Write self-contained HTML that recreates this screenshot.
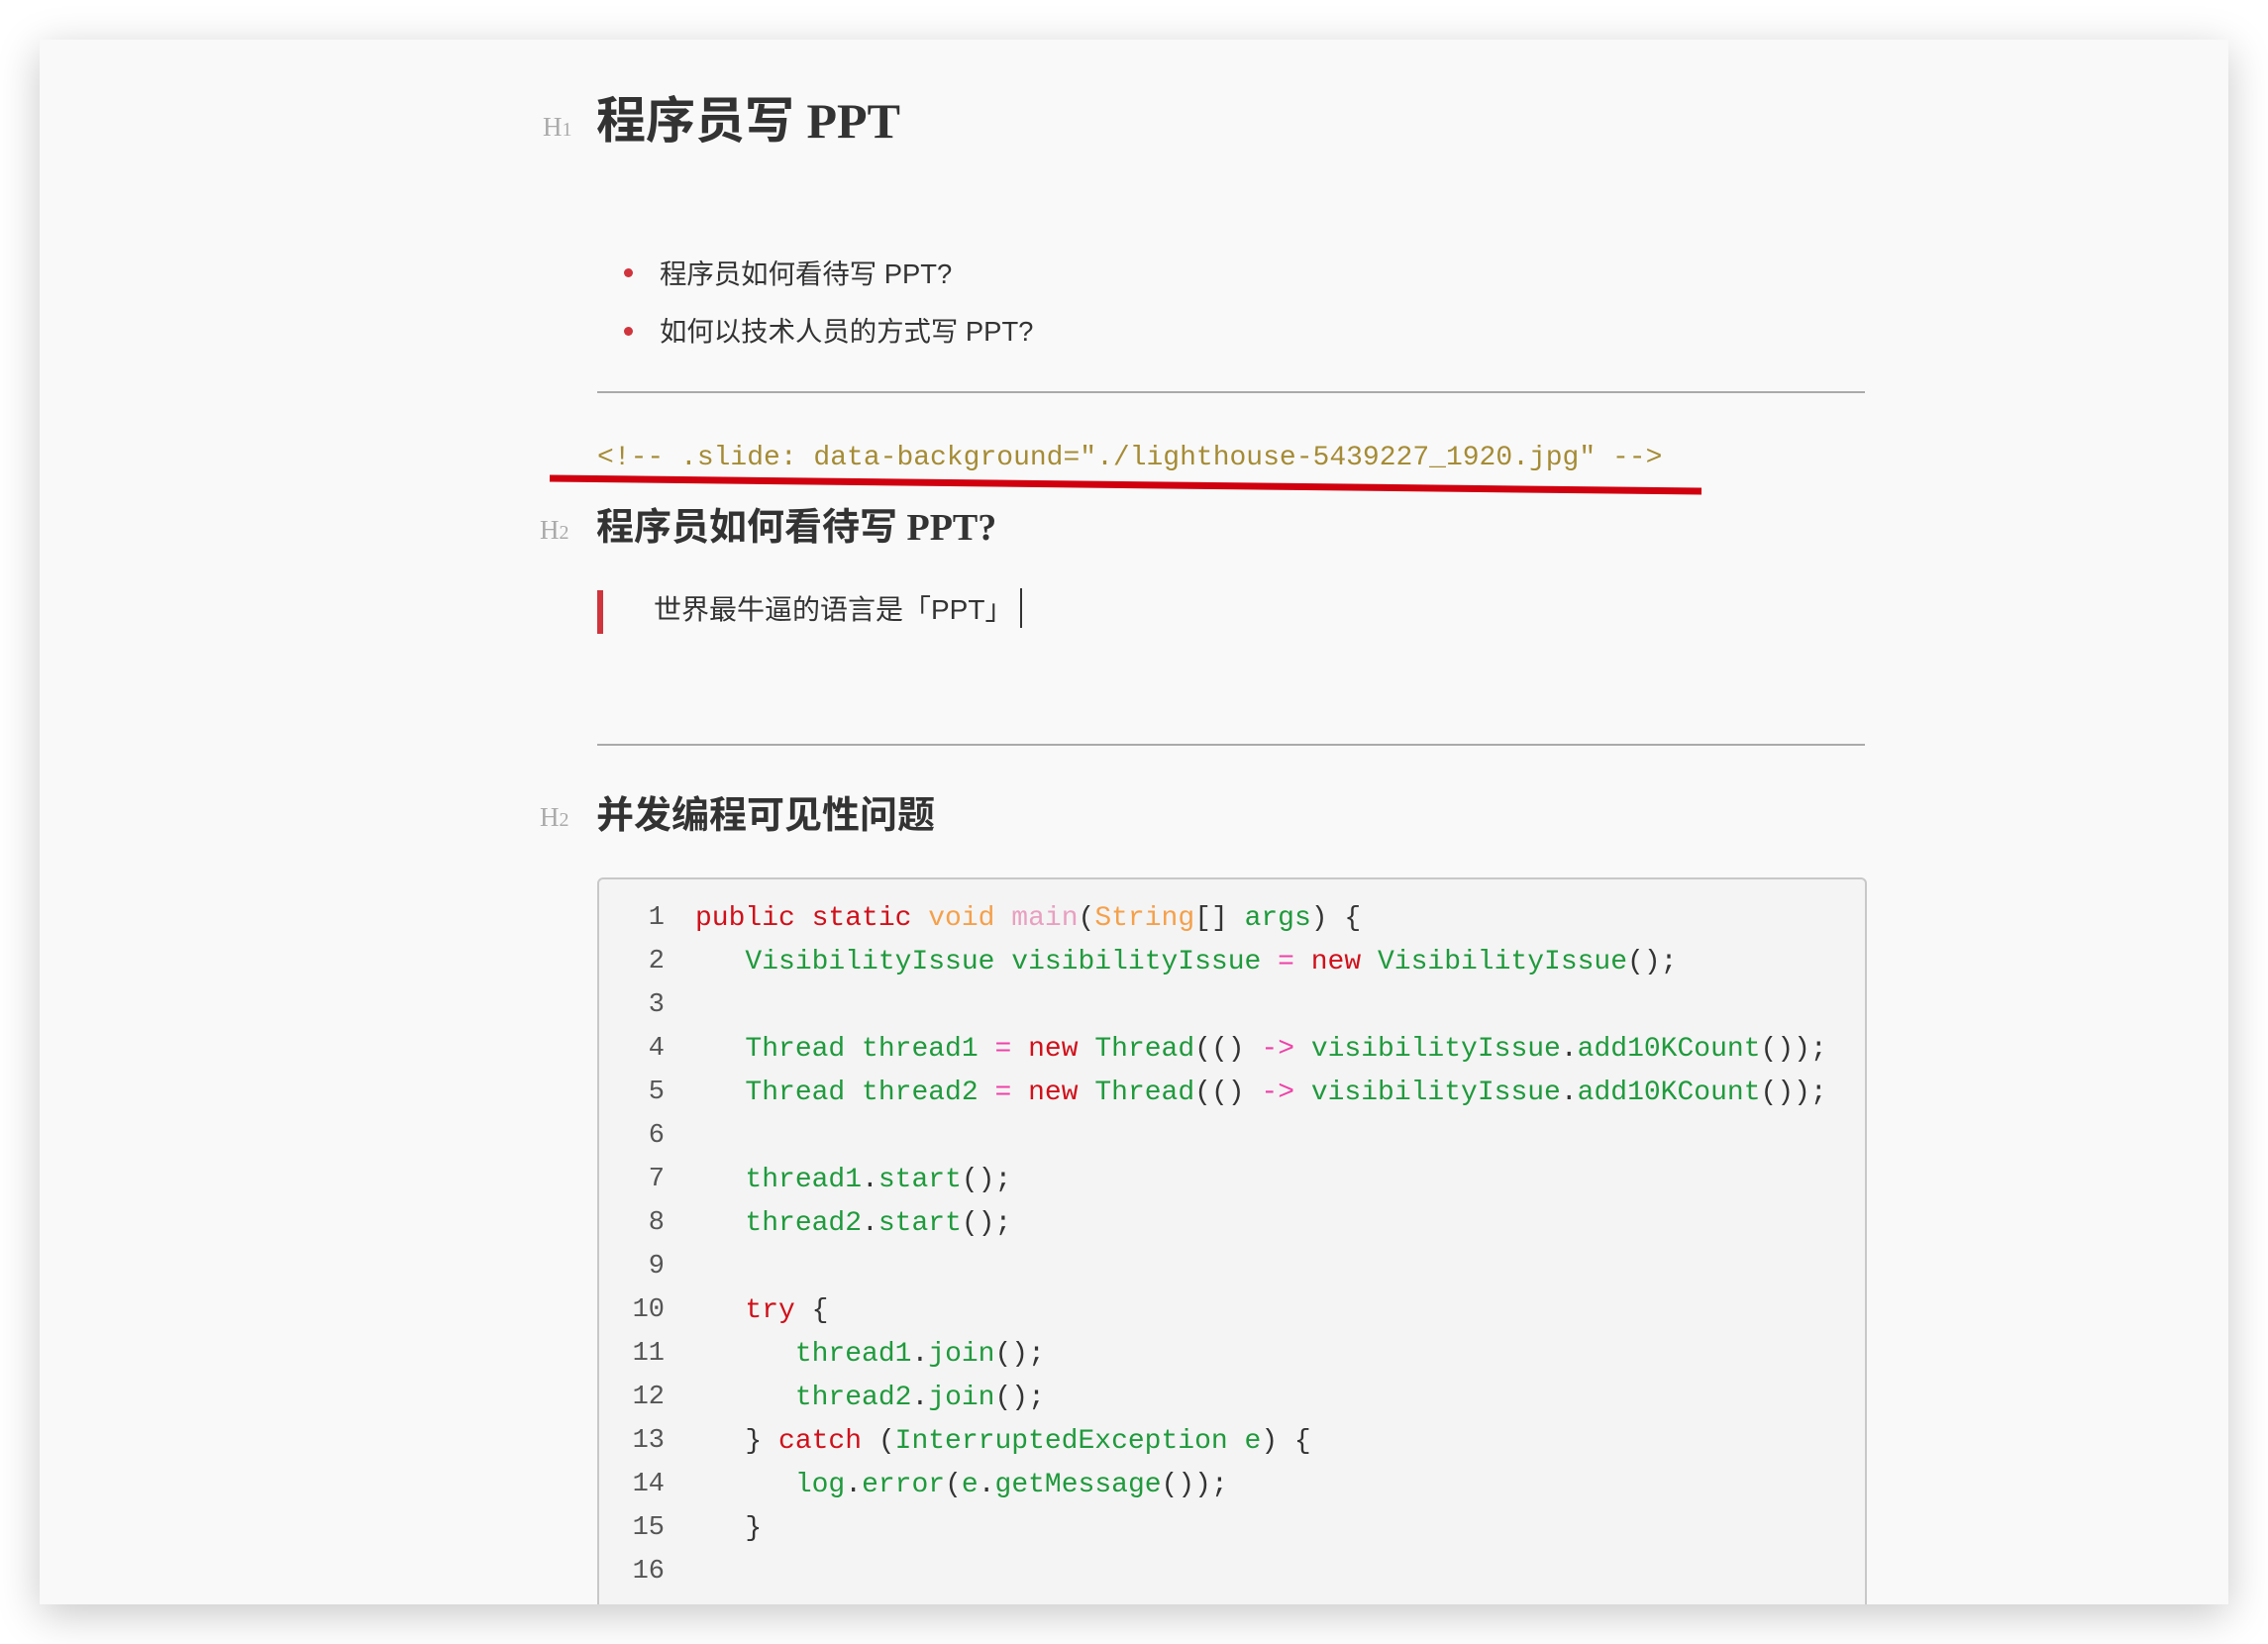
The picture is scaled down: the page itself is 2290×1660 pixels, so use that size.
<!DOCTYPE html>
<html><head><meta charset="utf-8"><style>
html,body{margin:0;padding:0;width:2290px;height:1660px;background:#fff;overflow:hidden}
.win{position:absolute;left:40px;top:40px;width:2210px;height:1580px;background:#f9f9f9;box-shadow:0 10px 40px rgba(0,0,0,.22);overflow:hidden}
.a{position:absolute;white-space:nowrap}
.lbl{font-family:"Liberation Serif",serif;color:#aaa;font-size:27px}
.h{font-family:"Liberation Serif","Noto Sans CJK SC",serif;font-weight:bold;color:#333}
.t{font-family:"Liberation Sans","Noto Sans CJK SC",sans-serif;color:#333;font-size:27.4px}
.hr{position:absolute;left:563px;width:1280px;height:2px;background:#aaa}
.dot{position:absolute;width:9px;height:9px;border-radius:50%;background:#d0343c}
.code{position:absolute;left:563px;top:846px;width:1278px;height:800px;background:#f4f4f4;border:2px solid #c8c8c8;border-radius:6px}
.ln{position:absolute;font-family:"Liberation Mono",monospace;font-size:27px;color:#555;width:56px;text-align:right;left:10px;margin-top:4px}
.cl{position:absolute;left:97px;font-family:"Liberation Mono",monospace;font-size:28px;color:#333;white-space:pre;margin-top:4px}
.k{color:#d0101a}.o{color:#f5a04a}.p{color:#e8a0c0}.g{color:#1f9a3c}.op{color:#f040a8}
</style></head><body>
<div class="win">
<div class="a lbl" style="left:508px;top:73px">H<span style="font-size:20px">1</span></div>
<div class="a h" style="left:562px;top:42px;font-size:50px">程序员写 PPT</div>

<div class="dot" style="left:590px;top:231px"></div>
<div class="a t" style="left:626px;top:214px">程序员如何看待写 PPT?</div>
<div class="dot" style="left:590px;top:290px"></div>
<div class="a t" style="left:626px;top:272px">如何以技术人员的方式写 PPT?</div>

<div class="hr" style="top:355px"></div>

<div class="a" style="left:563px;top:407px;font-family:'Liberation Mono',monospace;font-size:28px;color:#a58b35">&lt;!-- .slide: data-background="./lighthouse-5439227_1920.jpg" --&gt;</div>
<svg class="a" style="left:0;top:0" width="2210" height="500"><path d="M515 443 L1678 456" stroke="#d0000f" stroke-width="7" fill="none"/></svg>

<div class="a lbl" style="left:505px;top:480px">H<span style="font-size:20px">2</span></div>
<div class="a h" style="left:562px;top:461px;font-size:38px">程序员如何看待写 PPT?</div>

<div class="a" style="left:563px;top:556px;width:6px;height:44px;background:#d0343c"></div>
<div class="a t" style="left:620px;top:554px;font-size:28px">世界最牛逼的语言是「PPT」</div>
<div class="a" style="left:990px;top:554px;width:2px;height:40px;background:#333"></div>

<div class="hr" style="top:711px"></div>

<div class="a lbl" style="left:505px;top:770px">H<span style="font-size:20px">2</span></div>
<div class="a h" style="left:562px;top:752px;font-size:38px">并发编程可见性问题</div>

<div class="code">
<div class="ln" style="top:20px">1</div><div class="cl" style="top:20px"><span class="k">public static</span> <span class="o">void</span> <span class="p">main</span>(<span class="o">String</span>[] <span class="g">args</span>) {</div>
<div class="ln" style="top:64px">2</div><div class="cl" style="top:64px">   <span class="g">VisibilityIssue visibilityIssue</span> <span class="op">=</span> <span class="k">new</span> <span class="g">VisibilityIssue</span>();</div>
<div class="ln" style="top:108px">3</div>
<div class="ln" style="top:152px">4</div><div class="cl" style="top:152px">   <span class="g">Thread thread1</span> <span class="op">=</span> <span class="k">new</span> <span class="g">Thread</span>(() <span class="op">-&gt;</span> <span class="g">visibilityIssue</span>.<span class="g">add10KCount</span>());</div>
<div class="ln" style="top:196px">5</div><div class="cl" style="top:196px">   <span class="g">Thread thread2</span> <span class="op">=</span> <span class="k">new</span> <span class="g">Thread</span>(() <span class="op">-&gt;</span> <span class="g">visibilityIssue</span>.<span class="g">add10KCount</span>());</div>
<div class="ln" style="top:240px">6</div>
<div class="ln" style="top:284px">7</div><div class="cl" style="top:284px">   <span class="g">thread1</span>.<span class="g">start</span>();</div>
<div class="ln" style="top:328px">8</div><div class="cl" style="top:328px">   <span class="g">thread2</span>.<span class="g">start</span>();</div>
<div class="ln" style="top:372px">9</div>
<div class="ln" style="top:416px">10</div><div class="cl" style="top:416px">   <span class="k">try</span> {</div>
<div class="ln" style="top:460px">11</div><div class="cl" style="top:460px">      <span class="g">thread1</span>.<span class="g">join</span>();</div>
<div class="ln" style="top:504px">12</div><div class="cl" style="top:504px">      <span class="g">thread2</span>.<span class="g">join</span>();</div>
<div class="ln" style="top:548px">13</div><div class="cl" style="top:548px">   } <span class="k">catch</span> (<span class="g">InterruptedException e</span>) {</div>
<div class="ln" style="top:592px">14</div><div class="cl" style="top:592px">      <span class="g">log</span>.<span class="g">error</span>(<span class="g">e</span>.<span class="g">getMessage</span>());</div>
<div class="ln" style="top:636px">15</div><div class="cl" style="top:636px">   }</div>
<div class="ln" style="top:680px">16</div>
<div class="cl" style="top:724px">   <span class="g">log</span>.<span class="g">info</span>(<span class="g">"count</span> <span class="o">值为</span> <span class="g">= {}", count</span>);</div>
</div>
</div>
</body></html>
